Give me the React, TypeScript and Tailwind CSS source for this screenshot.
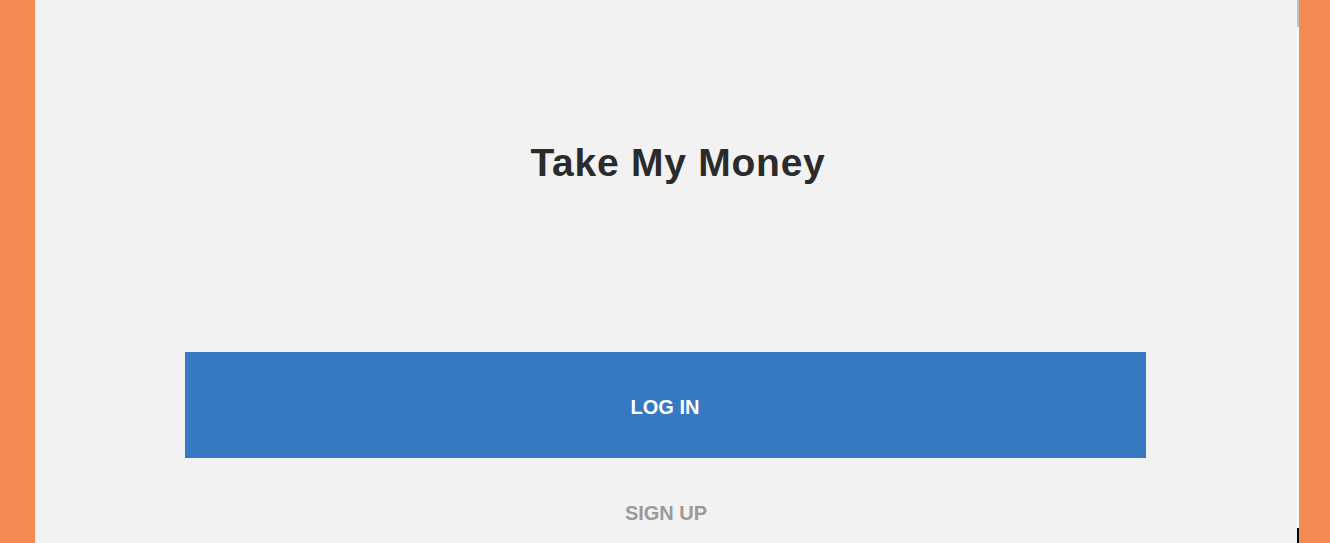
export default function App() {
  return (
    <div className="flex h-[543px] w-full overflow-hidden bg-[#f28a52] font-['Liberation_Sans',Arial,sans-serif]">
      <div className="w-[35px] shrink-0" />

      {/* main panel */}
      <main className="flex w-[1262px] shrink-0 flex-col items-center bg-[#f2f2f2]">
        <h1 className="mt-[143px] pl-[24px] text-[39px] font-bold leading-[40px] tracking-[0.75px] text-[#2b2b2b]">
          Take My Money
        </h1>
        <button className="mt-[169px] h-[106px] w-[961px] -translate-x-[1px] bg-[#3778c2] pt-[4px] text-[20px] font-bold text-white">
          LOG IN
        </button>
        <button className="mt-[40px] text-[20px] font-bold text-[#9a9a9a]">
          SIGN UP
        </button>
      </main>

      {/* scrollbar strip */}
      <div className="relative flex w-[2px] shrink-0 flex-col bg-[#fafafa]">
        <div className="h-[27px] bg-[#c4c4c4]" />
        <div className="absolute bottom-0 left-0 h-[15px] w-[2px] bg-black" />
      </div>

      <div className="flex-1" />
    </div>
  );
}
